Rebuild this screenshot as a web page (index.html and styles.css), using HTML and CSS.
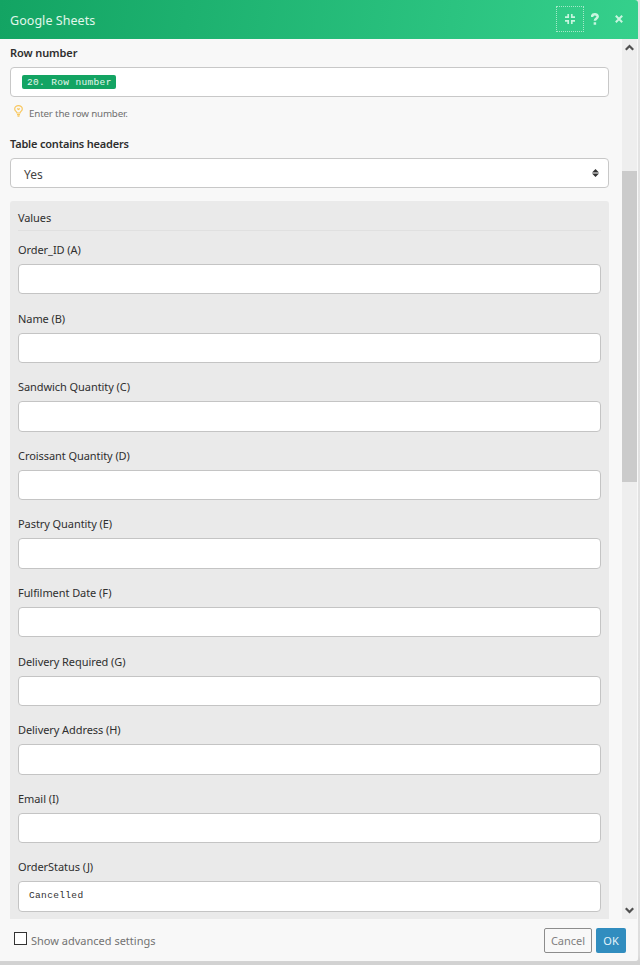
FILE: index.html
```html
<!DOCTYPE html>
<html lang="en">
<head>
<meta charset="utf-8">
<title>Google Sheets</title>
<link rel="stylesheet" href="styles.css">
</head>
<body>
<div class="dialog">
  <header class="header">
    <h1 class="title">Google Sheets</h1>
    <button class="tool focused" aria-label="Collapse">
      <svg width="10" height="10" viewBox="0 0 10 10" fill="none" stroke="currentColor" stroke-width="1.7"><path d="M0 3.2h3.2V0M6.8 0v3.2H10M0 6.8h3.2V10M6.8 10V6.8H10"/></svg>
    </button>
    <button class="tool help" aria-label="Help">
      <svg width="8" height="12" viewBox="0 0 8 12" fill="none" stroke="currentColor" stroke-width="2.5"><path d="M1 4C1 .5 6.7.5 6.7 3.6c0 2-2.8 1.8-2.8 4.2M3.9 9.2v2.6"/></svg>
    </button>
    <button class="tool close" aria-label="Close">
      <svg width="8" height="8" viewBox="0 0 8 8" stroke="currentColor" stroke-width="2"><path d="M.8.8l6.4 6.4M7.2.8L.8 7.2"/></svg>
    </button>
  </header>
  <div class="body">
    <main class="content">
      <div class="label strong row-label">Row number</div>
      <div class="input pill-input"><span class="pill">20. Row number</span></div>
      <div class="hint">
        <svg width="9" height="12" viewBox="0 0 9 12" fill="none" stroke="#f8c75f" stroke-width="1.2"><path d="M3 8C3 6.5.7 6 .7 3.9.7-.4 8.3-.4 8.3 3.9 8.3 6 6 6.5 6 8zM3 9.6h3M3.5 11.2h2M3.2 3.5l1.3 1 1.3-1"/></svg>
        <span>Enter the row number.</span>
      </div>
      <div class="label strong headers-label">Table contains headers</div>
      <div class="input select"><span>Yes</span>
        <svg width="7" height="8" viewBox="0 0 7 8" fill="#333"><path d="M0 3.4L3.5 0 7 3.4zM0 4.6h7L3.5 8z"/></svg>
      </div>
      <section class="values">
        <div class="values-title">Values</div>
        <div class="field"><label class="label">Order_ID (A)</label><div class="input"></div></div>
        <div class="field"><label class="label">Name (B)</label><div class="input"></div></div>
        <div class="field"><label class="label">Sandwich Quantity (C)</label><div class="input"></div></div>
        <div class="field"><label class="label">Croissant Quantity (D)</label><div class="input"></div></div>
        <div class="field"><label class="label">Pastry Quantity (E)</label><div class="input"></div></div>
        <div class="field"><label class="label">Fulfilment Date (F)</label><div class="input"></div></div>
        <div class="field"><label class="label">Delivery Required (G)</label><div class="input"></div></div>
        <div class="field"><label class="label">Delivery Address (H)</label><div class="input"></div></div>
        <div class="field"><label class="label">Email (I)</label><div class="input"></div></div>
        <div class="field"><label class="label">OrderStatus (J)</label><div class="input mono">Cancelled</div></div>
      </section>
    </main>
    <div class="scrollbar">
      <svg class="arrow" width="9" height="7" viewBox="0 0 8 6" fill="none" stroke="#505050" stroke-width="2"><path d="M.7 5L4 1.7 7.3 5"/></svg>
      <div class="thumb"></div>
      <svg class="arrow" width="9" height="7" viewBox="0 0 8 6" fill="none" stroke="#505050" stroke-width="2"><path d="M.7 1L4 4.3 7.3 1"/></svg>
    </div>
  </div>
  <footer class="footer">
    <span class="checkbox"></span>
    <span class="advanced">Show advanced settings</span>
    <button class="btn cancel">Cancel</button>
    <button class="btn ok">OK</button>
  </footer>
</div>
</body>
</html>
```

FILE: styles.css
```css
* { box-sizing: border-box; }
body {
  margin: 0;
  height: 965px;
  overflow: hidden;
  background: linear-gradient(#e4e4e4 0, #dedede 955px, #d2d2d2 962px);
  font-family: "Noto Sans", "Open Sans", sans-serif;
  font-size: 11px;
  color: #2f2f2f;
}
button { font: inherit; margin: 0; padding: 0; border: 0; background: none; }
svg { display: block; }
.dialog {
  width: 638px;
  height: 961px;
  display: flex;
  flex-direction: column;
  background: #f8f8f8;
  border-radius: 0 3px 3px 0;
  overflow: hidden;
}
.header {
  flex: none;
  height: 39px;
  display: flex;
  align-items: center;
  padding: 0 15px 0 10px;
  background: linear-gradient(100deg, #13a463, #35d08c);
}
.title {
  flex: 1;
  margin: 2px 0 0;
  font-size: 12.5px;
  font-weight: 400;
  letter-spacing: 0.05px;
  color: #e0f7eb;
}
.tool {
  display: flex;
  align-items: center;
  justify-content: center;
  color: #c8f5df;
}
.focused { width: 28px; height: 26px; margin-top: -1px; border: 1px dotted #a5e9c8; }
.help { width: 8px; margin: -2px 0 0 7px; }
.close { width: 8px; margin: -1px 0 0 16px; }
.body { flex: none; height: 880px; display: flex; overflow: hidden; }
.content { width: 622px; padding: 6px 13px 0 10px; }
.label { display: block; height: 16px; line-height: 16px; white-space: nowrap; letter-spacing: -0.07px; }
.strong { font-weight: 600; letter-spacing: -0.2px; }
.row-label { margin-bottom: 6px; letter-spacing: -0.1px; }
.input {
  height: 30px;
  background: #fff;
  border: 1px solid #c8c8c8;
  border-radius: 4px;
}
.pill-input { display: flex; align-items: center; padding-left: 11px; }
.pill {
  height: 14px;
  padding: 0 4px 0 5px;
  border-radius: 2px;
  background: #13a463;
  color: #e4f7ed;
  font: 9.5px/15px "Liberation Mono", monospace;
  letter-spacing: 0.35px;
}
.hint {
  display: flex;
  gap: 6px;
  height: 39px;
  padding: 8px 0 0 4px;
  font-size: 9.8px;
  line-height: 17px;
  letter-spacing: -0.18px;
  color: #707070;
}
.headers-label { margin-bottom: 6px; }
.select {
  display: flex;
  align-items: center;
  justify-content: space-between;
  padding: 0 9px 0 13px;
  font-size: 12px;
  color: #444;
}
.select span { padding-top: 2px; }
.values {
  height: 760px;
  margin-top: 13px;
  padding: 8px 8px 0;
  background: #eaeaea;
  border-radius: 3px 3px 0 0;
}
.values-title { height: 22px; line-height: 18px; letter-spacing: -0.1px; border-bottom: 1px solid #e0e0e0; margin-bottom: 11px; }
.field { height: 68.6px; }
.field .input { height: 30.4px; margin-top: 6px; border-color: #c4c4c4; }
.field .mono { padding-left: 10px; font: 9.5px/27px "Liberation Mono", monospace; letter-spacing: 0.35px; }
.scrollbar {
  width: 15px;
  display: flex;
  flex-direction: column;
  align-items: center;
  background: #eeeeee;
  padding: 5px 0;
}
.thumb { width: 15px; height: 311px; margin: 120px 0 auto; background: #cbcbcb; }
.footer {
  flex: 1;
  display: flex;
  align-items: center;
  padding: 0 12px 0 14px;
  background: #f8f8f8;
}
.checkbox { width: 13px; height: 13px; margin: -4px 4px 0 0; border: 1px solid #333; background: #fff; }
.advanced { flex: 1; color: #737373; }
.btn { height: 25px; border-radius: 2px; line-height: 23px; }
.cancel { width: 48px; margin-right: 4px; border: 1px solid #8c8c8c; color: #808080; }
.ok { width: 30px; background: #318dbf; color: #e4f3fb; }
```
